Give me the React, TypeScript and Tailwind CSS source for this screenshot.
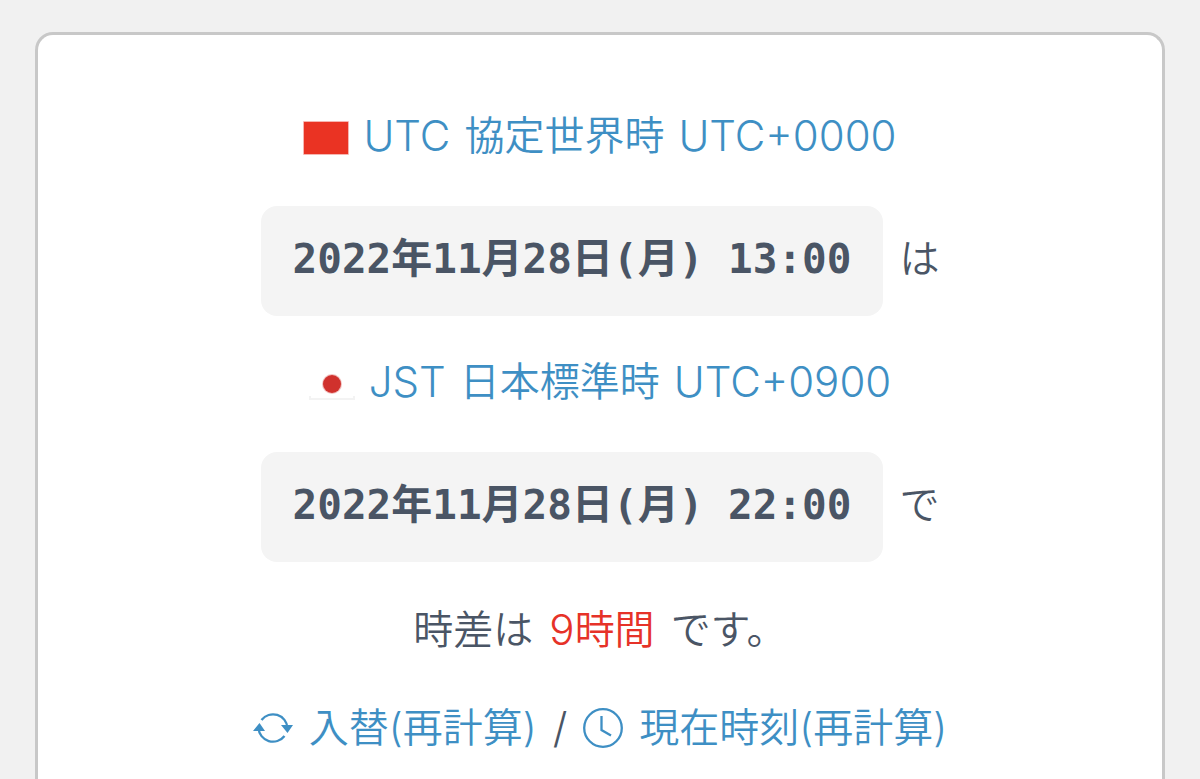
import React from "react";

const linkClass = "flex items-center text-[#3e8fc4] hover:underline";

const UtcFlag: React.FC = () => (
  <svg className="mt-1 h-[34px] w-[46px]" viewBox="0 0 46 34" aria-hidden="true">
    <rect width="46" height="34" rx="1" fill="#f6b5b0" />
    <rect x="1" y="1" width="44" height="32" fill="#ea3323" />
  </svg>
);

const JapanFlag: React.FC = () => (
  <svg className="mt-1 h-[34px] w-[46px]" viewBox="0 0 46 34" aria-hidden="true">
    <path d="M1 29v3h44v-3" fill="none" stroke="#f3f3f3" strokeWidth="2" />
    <circle cx="23" cy="17" r="10" fill="#d0312d" opacity="0.3" />
    <circle cx="23" cy="17" r="9" fill="#d0312d" />
  </svg>
);

const SwapIcon: React.FC = () => (
  <svg className="h-10 w-10" viewBox="0 0 40 40" fill="none" aria-hidden="true">
    <g stroke="currentColor" strokeWidth="2.3">
      <path d="M8.5 12A14.5 14.5 0 0 1 34.5 20" />
      <path d="M31.5 28A14.5 14.5 0 0 1 5.5 20" />
    </g>
    <path d="M28 17h12l-5.5 8zM0 23h12l-5.5-8z" fill="currentColor" />
  </svg>
);

const ClockIcon: React.FC = () => (
  <svg className="h-10 w-10" viewBox="0 0 40 40" fill="none" aria-hidden="true">
    <g stroke="currentColor" strokeWidth="2.3">
      <circle cx="20" cy="20" r="18.8" />
      <path d="M18.5 8v14l9.5 5.5" />
    </g>
  </svg>
);

interface ZoneLinkProps {
  href: string;
  flag: React.ReactNode;
  code: string;
  name: string;
  offset: string;
}

const ZoneLink: React.FC<ZoneLinkProps> = ({
  href,
  flag,
  code,
  name,
  offset,
}) => (
  <a href={href} className={`${linkClass} gap-3.5 pb-1 leading-[56px]`}>
    {flag}
    <span className="text-[42px] leading-[56px]">{code}</span>
    <span>{name}</span>
    <span className="text-[42px] leading-[56px]">{offset}</span>
  </a>
);

const TimeBox: React.FC<{ time: string; suffix: string }> = ({
  time,
  suffix,
}) => (
  <p className="flex items-baseline gap-4">
    <code className="rounded-2xl bg-[#f4f4f4] px-8 pt-6 pb-7 font-['DejaVu_Sans_Mono','Noto_Sans_CJK_JP',monospace] text-[41px] leading-[58px] font-bold">
      {time}
    </code>
    <span>{suffix}</span>
  </p>
);

const App: React.FC = () => {
  return (
    <div className="flex min-h-screen flex-col bg-[#f1f1f1] px-[35px] pt-8 font-['Inter','Noto_Sans_CJK_JP',sans-serif] text-[40px] leading-[60px] font-[350] text-[#4a5565]">
      <main className="flex grow flex-col items-center gap-[38px] rounded-t-[18px] border-3 border-b-0 border-[#c8c8c8] bg-white pt-[73px] pb-9 whitespace-nowrap">
        <ZoneLink
          href="#utc"
          flag={<UtcFlag />}
          code="UTC"
          name="協定世界時"
          offset="UTC+0000"
        />
        <TimeBox time="2022年11月28日(月) 13:00" suffix="は" />
        <ZoneLink
          href="#jst"
          flag={<JapanFlag />}
          code="JST"
          name="日本標準時"
          offset="UTC+0900"
        />
        <TimeBox time="2022年11月28日(月) 22:00" suffix="で" />
        <p className="flex items-center gap-4">
          <span>時差は</span>
          <span className="flex text-[#e63228]">
            <span className="text-[42px]">9</span>時間
          </span>
          <span>です。</span>
        </p>
        <p className="flex items-center gap-4">
          <a href="#swap" className={`${linkClass} gap-4`}>
            <SwapIcon />
            入替(再計算)
          </a>
          <span className="text-[42px]">/</span>
          <a href="#now" className={`${linkClass} gap-4`}>
            <ClockIcon />
            現在時刻(再計算)
          </a>
        </p>
      </main>
    </div>
  );
};

export default App;
